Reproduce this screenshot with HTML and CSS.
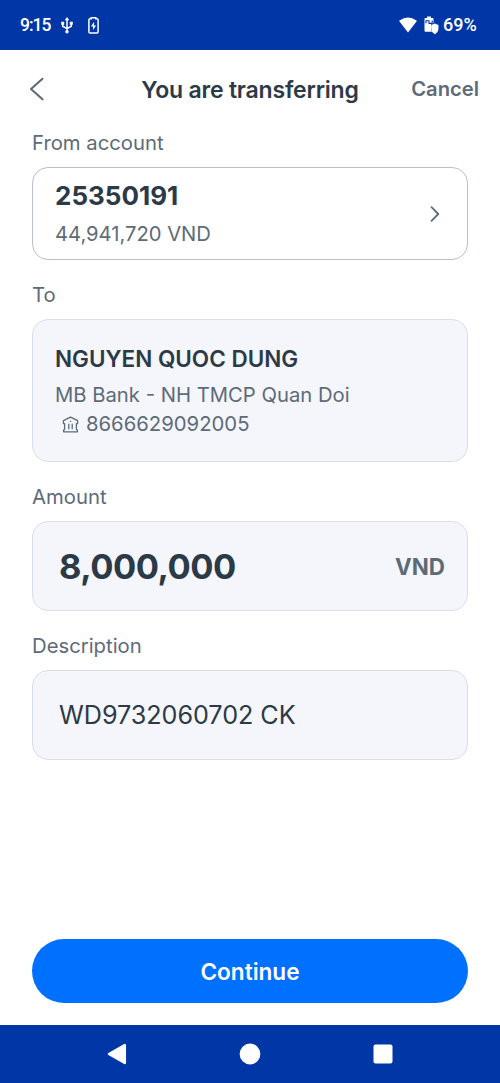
FILE: index.html
```html
<!DOCTYPE html>
<html lang="en">
<head>
<meta charset="utf-8">
<title>You are transferring</title>
<link rel="stylesheet" href="styles.css">
</head>
<body>
<div class="screen">
  <div class="status">
    <span class="time">9:15</span>
    <svg class="usb" width="12" height="17" viewBox="0 0 12 17" fill="none" stroke="#fff" stroke-width="1.5"><path d="M6 2v13M1.7 6v3.2L6 11.6l4.3-2.4V6"/><path d="M6 0 3.7 3.2h4.6zM.2 4.7h3v3h-3zM8.8 4.7h3v3h-3z" fill="#fff" stroke="none"/><circle cx="6" cy="14.8" r="1.7" fill="#fff" stroke="none"/></svg>
    <svg class="charge" width="11" height="17" viewBox="0 0 11 17"><path d="M3.2 1.8V.8h4.6v1h1.1q1.2 0 1.2 1.2v11.8q0 1.2-1.2 1.2H2.1Q.9 16 .9 14.8V3q0-1.2 1.2-1.2z" fill="none" stroke="#fff" stroke-width="1.5"/><path d="M6.1 4.8 3 9.5h2V13l3.1-4.6H6.1z" fill="#fff"/></svg>
    <svg class="wifi" width="18" height="16" viewBox="0 0 18 16"><path d="M.5 3.5Q9-2.5 17.5 3.5Q18 4 17.5 4.6L9 15.5.5 4.6Q0 4 .5 3.5z" fill="#fff"/></svg>
    <svg class="saver" width="15" height="19" viewBox="0 0 15 19"><path d="M.5 3Q.5 2 1.5 2H3V.5h4V2h1.5q1 0 1 1v4L7 8.2V12q0 2 1 3.8H1.5q-1 0-1-1z" fill="#fff"/><path d="M2 7.3V4.8h3v2.6h3.2V4.6" stroke="#0036a6" fill="none" stroke-width="1.1"/><path d="m10.8 7.5 3.7 1.6V12q0 4.3-3.7 6.2Q7.2 16.3 7.2 12V9.1z" fill="#fff"/></svg>
    <span class="percent">69%</span>
  </div>
  <header class="header">
    <svg class="back" width="16" height="24" viewBox="0 0 16 24"><path d="M13.5 1.8 2 12l11.5 10.2" fill="none" stroke="#5d6b79" stroke-width="2.1" stroke-linecap="round" stroke-linejoin="round"/></svg>
    <h1 class="title">You are transferring</h1>
    <span class="cancel">Cancel</span>
  </header>
  <main class="form">
    <div class="label">From account</div>
    <section class="card source">
      <div><div class="account">25350191</div><div class="balance">44,941,720 VND</div></div>
      <svg width="10" height="16" viewBox="0 0 10 16"><path d="m1.5 1.2 6.8 6.8-6.8 6.8" fill="none" stroke="#5d6b79" stroke-width="1.8" stroke-linecap="round" stroke-linejoin="round"/></svg>
    </section>
    <div class="label to">To</div>
    <section class="card filled recipient">
      <div class="name">NGUYEN QUOC DUNG</div>
      <div class="bank">MB Bank - NH TMCP Quan Doi</div>
      <div class="number"><svg width="17" height="17" viewBox="0 0 17 17" fill="none" stroke="#5d6b79" stroke-width="1.3" stroke-linejoin="round" stroke-linecap="round"><path d="M8.5 1.2 1.4 4.6v3h1.2v5.6l-1 1v1.6h13.8v-1.6l-1-1V7.6h1.2v-3zM6.8 8.2v4.6M10.2 8.2v4.6"/><path d="M8.5 5.2h.01" stroke-width="1.6"/></svg><span class="digits">8666629092005</span></div>
    </section>
    <div class="label amount-label">Amount</div>
    <section class="card filled field"><span class="amount">8,000,000</span><span class="currency">VND</span></section>
    <div class="label description-label">Description</div>
    <section class="card filled field"><span class="description">WD9732060702 CK</span></section>
  </main>
  <button class="continue">Continue</button>
  <nav class="nav">
    <svg width="20" height="22" viewBox="0 0 20 22"><path d="M17.8 2v18L2 11z" fill="#fff" stroke="#fff" stroke-width="2.5" stroke-linejoin="round"/></svg>
    <svg width="22" height="22" viewBox="0 0 22 22"><circle cx="11" cy="11" r="10.4" fill="#fff"/></svg>
    <svg width="20" height="20" viewBox="0 0 20 20"><rect x=".5" y=".5" width="19" height="19" rx="2" fill="#fff"/></svg>
  </nav>
</div>
</body>
</html>
```
FILE: styles.css
```css
* { box-sizing: border-box; }
body { margin: 0; font-family: Inter, "Liberation Sans", sans-serif; color: #2c3a47; background: #fff; }
svg { display: block; flex: none; }
.screen { width: 500px; height: 1083px; display: flex; flex-direction: column; overflow: hidden; white-space: nowrap; }
.status { height: 50px; flex: none; background: #0036a6; color: #fff; display: flex; align-items: center; padding: 0 22px 0 20px; font: 500 17.5px/20px Roboto, sans-serif; }
.time { width: 41px; letter-spacing: -1px; }
.charge { margin-left: 15px; }
.wifi { margin-left: auto; }
.saver { margin-left: 7px; }
.percent { margin-left: 4px; width: 35px; font-size: 18px; }
.header { height: 77px; flex: none; display: grid; grid-template-columns: 90px 1fr 90px; align-items: center; padding: 2px 21px 0 29px; }
.header .back { margin-top: -1px; }
.title { margin: 0 8px 0 0; font-size: 23px; letter-spacing: -.2px; line-height: 32px; font-weight: 600; text-align: center; }
.cancel { text-align: right; color: #5d6b79; font-size: 20.2px; font-weight: 600; padding-bottom: 2px; }
.form { padding: 0 32px; }
.label { height: 32px; line-height: 32px; margin-bottom: 8px; font-size: 20.3px; color: #5d6b79; }
.card { border: 1px solid #b8c0cc; border-radius: 16px; }
.filled { background: #f5f6fb; border-color: #d8dfe8; }
.to, .amount-label, .description-label { margin-top: 19px; }
.source { height: 93px; display: flex; justify-content: space-between; align-items: center; padding: 0 27px 0 22px; }
.account { font-size: 26px; line-height: 38px; font-weight: 700; padding-top: 2px; }
.balance { font-size: 20.2px; line-height: 37px; color: #5d6b79; }
.recipient { height: 143px; padding: 19px 22px; }
.name { font-size: 22.5px; line-height: 39px; font-weight: 600; }
.bank { font-size: 20.25px; line-height: 33px; color: #5d6b79; }
.number { display: flex; align-items: center; gap: 7px; padding-left: 7px; font-size: 20.3px; line-height: 26px; color: #5d6b79; }
.field { height: 90px; display: flex; align-items: center; justify-content: space-between; padding: 0 22px 0 27px; }
.amount { font-size: 34.5px; font-weight: 700; letter-spacing: -.5px; margin-left: -1px; }
.currency { font-size: 22.4px; font-weight: 700; color: #5d6b79; padding-top: 1px; }
.description { font-size: 25.2px; letter-spacing: -.05px; margin-left: -1px; }
.continue { flex: none; height: 64px; margin: auto 32px 22px; padding: 1px 0 0; border: 0; border-radius: 32px; background: #0070ff; color: #fff; font: 600 22.6px Inter, sans-serif; }
.nav { height: 58px; flex: none; background: #0036a6; display: flex; align-items: center; justify-content: space-between; padding: 0 107px; }
```
